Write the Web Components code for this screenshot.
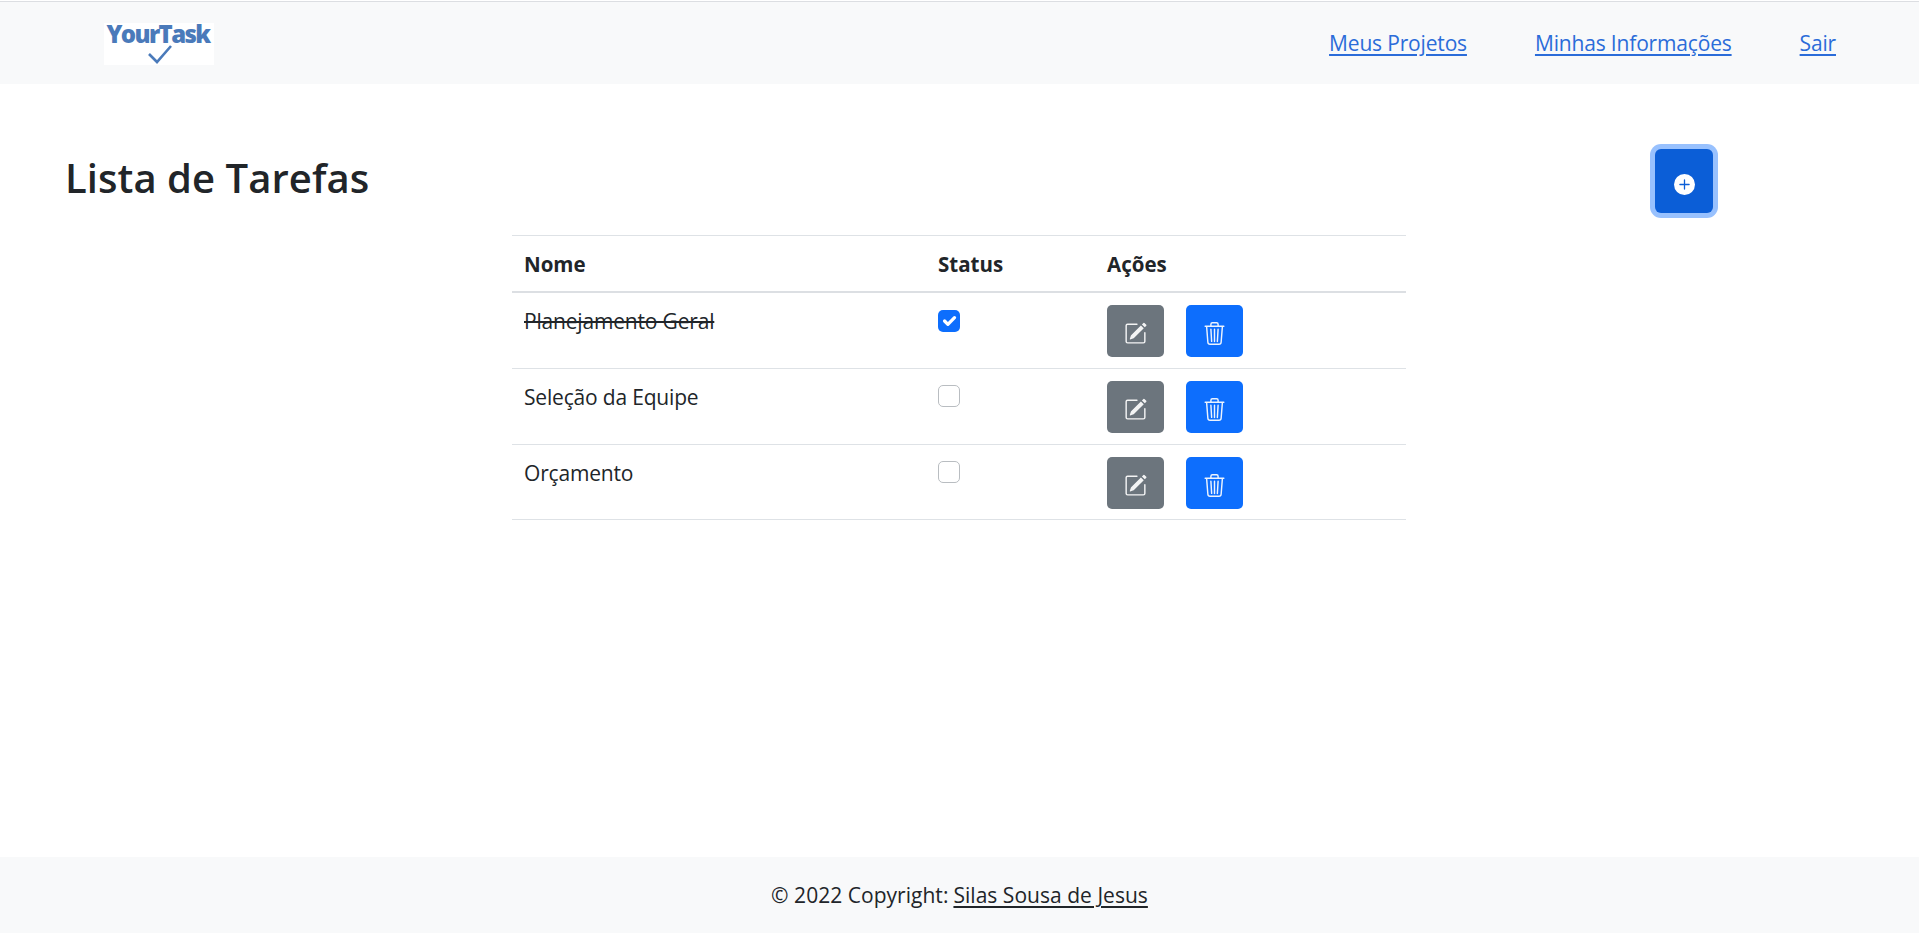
<!DOCTYPE html>
<html lang="pt-BR"><head><meta charset="utf-8"><title>YourTask</title>
<style>
html,body{margin:0;height:100%;background:#fff}
body{font-family:"Open Sans","Noto Sans",sans-serif;color:#212529;font-size:21px;overflow:hidden}
#app{display:flex;flex-direction:column;height:933px}
</style></head><body>
<div id="app">
<x-navbar>
  <x-logo slot="brand"></x-logo>
  <a href="#">Meus Projetos</a>
  <a href="#">Minhas Informações</a>
  <a href="#">Sair</a>
</x-navbar>
<x-main>
  <x-title-row heading="Lista de Tarefas"></x-title-row>
  <x-task-table>
    <x-task-row name="Planejamento Geral" done></x-task-row>
    <x-task-row name="Seleção da Equipe"></x-task-row>
    <x-task-row name="Orçamento" last></x-task-row>
  </x-task-table>
</x-main>
<x-footer></x-footer>
</div>
<script>
const ICONS={
 edit:'<path d="M15.502 1.94a.5.5 0 0 1 0 .706L14.459 3.69l-2-2L13.502.646a.5.5 0 0 1 .707 0l1.293 1.293zm-1.75 2.456-2-2L4.939 9.21a.5.5 0 0 0-.121.196l-.805 2.414a.25.25 0 0 0 .316.316l2.414-.805a.5.5 0 0 0 .196-.12l6.813-6.814z"/><path fill-rule="evenodd" d="M1 13.5A1.5 1.5 0 0 0 2.5 15h11a1.5 1.5 0 0 0 1.5-1.5v-6a.5.5 0 0 0-1 0v6a.5.5 0 0 1-.5.5h-11a.5.5 0 0 1-.5-.5v-11a.5.5 0 0 1 .5-.5H9a.5.5 0 0 0 0-1H2.5A1.5 1.5 0 0 0 1 2.5v11z"/>',
 trash:'<path d="M6.5 1h3a.5.5 0 0 1 .5.5v1H6v-1a.5.5 0 0 1 .5-.5ZM11 2.5v-1A1.5 1.5 0 0 0 9.5 0h-3A1.5 1.5 0 0 0 5 1.5v1H2.506a.58.58 0 0 0-.01 0H1.5a.5.5 0 0 0 0 1h.538l.853 10.66A2 2 0 0 0 4.885 16h6.23a2 2 0 0 0 1.994-1.84l.853-10.66h.538a.5.5 0 0 0 0-1h-.995a.59.59 0 0 0-.01 0H11Zm1.958 1-.846 10.58a1 1 0 0 1-.997.92h-6.23a1 1 0 0 1-.997-.92L3.042 3.5h9.916Zm-7.487 1a.5.5 0 0 1 .528.47l.5 8.5a.5.5 0 0 1-.998.06L5 5.03a.5.5 0 0 1 .47-.53Zm5.058 0a.5.5 0 0 1 .47.53l-.5 8.5a.5.5 0 1 1-.998-.06l.5-8.5a.5.5 0 0 1 .528-.47ZM8 4.5a.5.5 0 0 1 .5.5v8.5a.5.5 0 0 1-1 0V5a.5.5 0 0 1 .5-.5Z"/>',
 plus:'<path d="M16 8A8 8 0 1 1 0 8a8 8 0 0 1 16 0zM8.5 4.5a.5.5 0 0 0-1 0v3h-3a.5.5 0 0 0 0 1h3v3a.5.5 0 0 0 1 0v-3h3a.5.5 0 0 0 0-1h-3v-3z"/>'
};
const svg=(n,s)=>`<svg xmlns="http://www.w3.org/2000/svg" width="${s}" height="${s}" viewBox="0 0 16 16" fill="currentColor">${ICONS[n]}</svg>`;
function def(tag,html){customElements.define(tag,class extends HTMLElement{
  constructor(){super();this.attachShadow({mode:'open'});}
  connectedCallback(){
    if(!this._r){this._r=1;this.shadowRoot.innerHTML=typeof html==='function'?html(this):html;}
  }
});}
def('x-navbar',`<style>
:host{display:flex;flex:none;height:82px;box-sizing:content-box;border-top:1px solid #dcdee2;margin-top:1px;background:#f8f9fa;align-items:stretch;padding:0 83px 0 104px;justify-content:space-between}
nav{display:flex;gap:68px;align-items:center}
::slotted(a){color:#2b6cd9;font-size:21px;letter-spacing:-.17px;text-decoration:underline;text-underline-offset:3px}
.b{display:flex;align-items:flex-start;padding-top:21px}
</style><div class="b"><slot name="brand"></slot></div><nav><slot></slot></nav>`);
def('x-logo',`<style>
:host{display:flex;flex-direction:column;align-items:center;width:110px;height:42px;background:#fff}
span{font:800 24px/24px "Open Sans",sans-serif;color:#4a7aba;letter-spacing:-1.6px;margin-top:-1px;margin-right:2px}
svg{margin-top:-3px;margin-left:1px}
</style><span>YourTask</span><svg width="26" height="22" viewBox="0 0 26 22"><path d="M2 11l8 8L24 3" fill="none" stroke="#4a7aba" stroke-width="2.6"/></svg>`);
def('x-main',`<style>:host{display:flex;flex-direction:column;flex:1;min-height:0}</style><slot></slot>`);
def('x-title-row',h=>`<style>
:host{display:flex;justify-content:space-between;align-items:flex-start;padding:61px 201px 0 65px;height:90px}
h1{margin:0;font-size:40px;line-height:54px;font-weight:600;letter-spacing:.05px;color:#212529;margin-top:6px}
button{all:unset;display:flex;align-items:center;justify-content:center;box-sizing:border-box;width:58px;height:64px;margin-top:4px;margin-right:5px;background:#0b5ed7;border-radius:6px;box-shadow:0 0 0 5px #98c1fe;color:#fff;padding:7px 0 0 0}
svg{color:#fff}
</style><h1>${h.getAttribute('heading')||''}</h1><button aria-label="Adicionar">${svg('plus',21)}</button>`);
def('x-task-table',`<style>
:host{display:block;margin:0 513px 0 512px;border-top:1px solid #dee2e6}
.h{display:grid;grid-template-columns:414px 169px 1fr;height:55px;align-items:center;font-weight:700;font-size:20.5px;border-bottom:2px solid #dcdfe3}
.h div{padding-left:12px}
</style><div class="h"><div>Nome</div><div>Status</div><div>Ações</div></div><slot></slot>`);
def('x-checkbox',h=>`<style>
:host{display:block;width:22px;height:22px;box-sizing:border-box;border-radius:5px;${h.hasAttribute('checked')?'background:#0d6efd;':'background:#fff;border:1px solid #b9bdc1;'}}
svg{display:block}
</style>${h.hasAttribute('checked')?'<svg width="22" height="22" viewBox="0 0 20 20"><path d="M6 10l3 3 6-6" fill="none" stroke="#fff" stroke-width="3" stroke-linecap="round" stroke-linejoin="round"/></svg>':''}`);
def('x-icon-button',h=>`<style>
:host{display:flex;width:57px;height:52px;box-sizing:border-box;border-radius:5px;align-items:center;justify-content:center;color:#fff;padding-top:5px;background:${h.getAttribute('kind')==='edit'?'#6c757d':'#0d6efd'}}
svg{opacity:.92}
</style>${svg(h.getAttribute('kind'),23)}`);
def('x-task-row',h=>`<style>
:host{display:grid;grid-template-columns:414px 169px 1fr;height:74.8px;border-bottom:1px solid #dee2e6;box-sizing:content-box}
.n{padding:14px 0 0 12px;line-height:28px;font-size:21px;${h.hasAttribute('done')?'text-decoration:line-through;':''}letter-spacing:-.18px}
.s{padding:16.5px 0 0 12px}
.a{display:flex;gap:22px;padding:12px 0 0 12px}
</style><div class="n">${h.getAttribute('name')}</div><div class="s"><x-checkbox ${h.hasAttribute('done')?'checked':''}></x-checkbox></div><div class="a"><x-icon-button kind="edit"></x-icon-button><x-icon-button kind="trash"></x-icon-button></div>`);
def('x-footer',`<style>
:host{display:flex;flex:none;height:76px;background:#f8f9fa;align-items:center;justify-content:center;font-size:21px;letter-spacing:.03px}
a{color:#212529;text-decoration:underline;text-underline-offset:3px;margin-left:5px}
</style><span>© 2022 Copyright:</span><a href="#">Silas Sousa de Jesus</a>`);
</script>
</body></html>
